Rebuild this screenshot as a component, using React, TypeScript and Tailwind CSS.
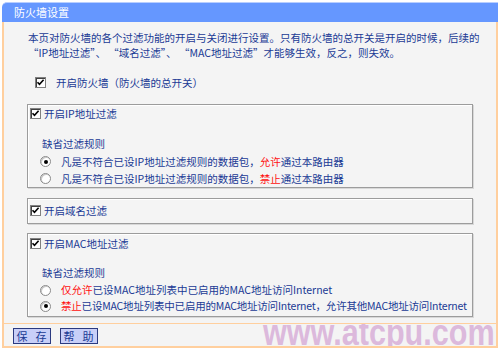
const font = { fontFamily: '"Noto Sans CJK SC", "Liberation Sans", sans-serif' };

const Check = () => (
  <span className="inline-flex w-[11px] h-[11px] shrink-0 items-center justify-center bg-white border border-[#808080] shadow-[inset_1px_1px_0_#404040]">
    <svg width="9" height="9" viewBox="0 0 9 9">
      <path d="M1.5 4.2 L3.5 6.4 L7.6 1.8" fill="none" stroke="#000" strokeWidth="1.6" />
    </svg>
  </span>
);

const Radio = ({ on }: { on?: boolean }) => (
  <span className="inline-flex w-[11px] h-[11px] shrink-0 items-center justify-center rounded-full bg-white border border-[#8a8a8a] shadow-[inset_1px_1px_0_#c8c8c8]">
    {on && <span className="w-[4px] h-[4px] rounded-full bg-black" />}
  </span>
);

const Red = ({ children }: { children: React.ReactNode }) => (
  <span className="text-[#ff1010]">{children}</span>
);

const Box = ({ className, children }: { className: string; children: React.ReactNode }) => (
  <div className={`ml-[23px] w-[446px] border border-[#9c9c9c] shadow-[inset_1px_1px_0_#ffffff,1px_1px_0_#d8d8d8] ${className}`}>
    {children}
  </div>
);

export default function App() {
  return (
    <div className="w-[500px] h-[349px] bg-white pt-[2px] px-[2px] text-[10.5px] text-[#1a3a94]" style={font}>
      {/* 标题栏 */}
      <div className="h-[20px] bg-[#6597ff] rounded-tl-[5px] border-t border-[#b8ceff] pl-[12px] leading-[19px] text-[11px] text-white">
        防火墙设置
      </div>

      {/* 主体 */}
      <div className="h-[301px] border-x-2 border-[#ffcf9e] bg-[#f4f4f4] pt-[8px]">
        <div className="pl-[24px] leading-[15px] whitespace-pre">
          <p>本页对防火墙的各个过滤功能的开启与关闭进行设置。只有防火墙的总开关是开启的时候，后续的</p>
          <p>“IP地址过滤”、 “域名过滤”、 “MAC地址过滤”才能够生效，反之，则失效。</p>
        </div>

        <div className="mt-[15px] ml-[31px] h-[15px] flex items-center gap-[10px]">
          <Check />
          <span>开启防火墙（防火墙的总开关）</span>
        </div>

        <Box className="mt-[14px] h-[84px] pt-[1px]">
          <div className="pl-[2px] h-[15px] flex items-center gap-[3px]">
            <Check />
            <span>开启IP地址过滤</span>
          </div>
          <p className="mt-[15px] pl-[14px] leading-[15px]">缺省过滤规则</p>
          <div className="mt-[2px] pl-[12px] h-[17px] flex items-center gap-[10px]">
            <Radio on />
            <span>
              凡是不符合已设IP地址过滤规则的数据包，<Red>允许</Red>通过本路由器
            </span>
          </div>
          <div className="pl-[12px] h-[17px] flex items-center gap-[10px]">
            <Radio />
            <span>
              凡是不符合已设IP地址过滤规则的数据包，<Red>禁止</Red>通过本路由器
            </span>
          </div>
        </Box>

        <Box className="mt-[10px] h-[26px] pt-[4px]">
          <div className="pl-[2px] h-[15px] flex items-center gap-[3px]">
            <Check />
            <span>开启域名过滤</span>
          </div>
        </Box>

        <Box className="mt-[9px] h-[84px] pt-[2px]">
          <div className="pl-[2px] h-[15px] flex items-center gap-[3px]">
            <Check />
            <span>开启MAC地址过滤</span>
          </div>
          <p className="mt-[14px] pl-[14px] leading-[15px]">缺省过滤规则</p>
          <div className="mt-[2px] pl-[12px] h-[16px] flex items-center gap-[10px] whitespace-nowrap">
            <Radio />
            <span>
              <Red>仅允许</Red>已设MAC地址列表中已启用的MAC地址访问Internet
            </span>
          </div>
          <div className="pl-[12px] h-[16px] flex items-center gap-[10px] whitespace-nowrap tracking-[-0.2px]">
            <Radio on />
            <span>
              <Red>禁止</Red>已设MAC地址列表中已启用的MAC地址访问Internet，允许其他MAC地址访问Internet
            </span>
          </div>
        </Box>
      </div>

      {/* 按钮栏 */}
      <div className="relative h-[25px] border-2 border-t border-[#ffcf9e] bg-[#f4f4f4] pl-[9px] pt-[4px] flex items-start gap-[9px] overflow-hidden">
        <button className="w-[38px] h-[16px] p-0 bg-[#c8cff8] border border-[#2b3a80] text-[11px] leading-[14px] whitespace-pre tracking-[1px] text-[#1a3a94]">
          保  存
        </button>
        <button className="w-[38px] h-[16px] p-0 bg-[#c8cff8] border border-[#2b3a80] text-[11px] leading-[14px] whitespace-pre tracking-[1px] text-[#1a3a94]">
          帮  助
        </button>
        <span
          className="absolute right-[1px] bottom-[-5px] origin-right scale-x-[0.85] text-[36px] font-bold leading-[36px] text-[#dcb9dc] whitespace-nowrap"
          style={{ fontFamily: '"Liberation Sans", Arial, sans-serif' }}
        >
          www.atcpu.com
        </span>
      </div>
    </div>
  );
}
